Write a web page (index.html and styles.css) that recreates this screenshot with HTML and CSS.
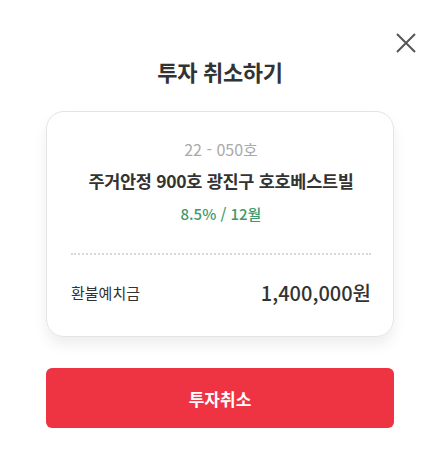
FILE: index.html
```html
<!DOCTYPE html>
<html lang="ko">
<head>
<meta charset="utf-8">
<link rel="stylesheet" href="styles.css">
</head>
<body>
<div class="modal">
  <button class="close" aria-label="닫기">
    <svg width="22" height="22" viewBox="0 0 22 22"><path d="M2 2 L20 20 M20 2 L2 20" stroke="#555" stroke-width="2" fill="none"/></svg>
  </button>
  <h1 class="title">투자 취소하기</h1>
  <div class="card">
    <div class="card-top">
      <div class="code">22 - 050호</div>
      <div class="name">주거안정 900호 광진구 호호베스트빌</div>
      <div class="rate">8.5% / 12월</div>
    </div>
    <div class="divider"></div>
    <div class="row">
      <span class="label">환불예치금</span>
      <span class="amount">1,400,000원</span>
    </div>
  </div>
  <button class="cancel">투자취소</button>
</div>
</body>
</html>
```

FILE: styles.css
```css
* { box-sizing: border-box; }
html, body { margin: 0; padding: 0; background: #fff; }
body {
  font-family: "Noto Sans CJK KR", "Noto Sans", sans-serif;
  color: #333;
  width: 440px;
  height: 469px;
  overflow: hidden;
}
.modal {
  position: relative;
  padding: 55px 46px 0 46px;
  display: flex;
  flex-direction: column;
}
.close {
  position: absolute;
  top: 32px;
  right: 23px;
  width: 22px;
  height: 22px;
  padding: 0;
  border: 0;
  background: none;
  display: flex;
}
.title {
  margin: 0;
  text-align: center;
  font-size: 22px;
  font-weight: 700;
  line-height: 32px;
  color: #333;
  letter-spacing: -0.3px;
}
.card {
  margin-top: 24px;
  border: 1px solid #e4e4e4;
  border-radius: 18px;
  box-shadow: 0 8px 14px rgba(0,0,0,0.07);
  padding: 27px 22px 0 24px;
  height: 226px;
}
.card-top {
  display: flex;
  flex-direction: column;
  align-items: center;
}
.code {
  font-size: 16px;
  color: #aaa;
  line-height: 20px;
}
.name {
  margin-top: 10px;
  font-size: 17.5px;
  font-weight: 700;
  color: #333;
  line-height: 24px;
  letter-spacing: -0.3px;
}
.rate {
  margin-top: 11px;
  font-size: 15px;
  color: #3f9a6b;
  line-height: 20px;
  font-weight: 500;
}
.divider {
  margin-top: 29px;
  border-top: 2px dotted #d8d8d8;
}
.row {
  margin-top: 24px;
  display: flex;
  justify-content: space-between;
  align-items: center;
  line-height: 28px;
}
.label {
  font-size: 15px;
  color: #333;
}
.amount {
  font-size: 20px;
  font-weight: 500;
  color: #333;
}
.cancel {
  margin-top: 31px;
  height: 60px;
  border: 0;
  border-radius: 6px;
  background: #ee3343;
  color: #fff;
  font-family: inherit;
  font-size: 17px;
  font-weight: 700;
}
```
